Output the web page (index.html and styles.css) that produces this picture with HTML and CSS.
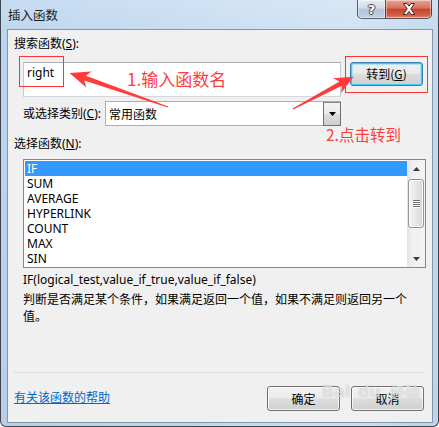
FILE: index.html
```html
<!DOCTYPE html>
<html lang="zh-CN">
<head>
<meta charset="utf-8">
<title>插入函数</title>
<link rel="stylesheet" href="styles.css">
</head>
<body>
<div class="window">
  <div class="titlebar">
    <span class="title">插入函数</span>
    <div class="caption-buttons">
      <div class="cap-btn cap-help"><span class="q">?</span></div>
      <div class="cap-btn cap-close">
        <svg width="14" height="12" viewBox="0 0 14 12">
          <path d="M1.5 0.5 L5 0.5 L7 3.2 L9 0.5 L12.5 0.5 L8.8 5.8 L12.7 11.5 L9.2 11.5 L7 8.4 L4.8 11.5 L1.3 11.5 L5.2 5.8 Z" fill="#ffffff" stroke="#4a2a22" stroke-width="1" stroke-linejoin="round"/>
        </svg>
      </div>
    </div>
  </div>
  <div class="client">
    <div class="label">搜索函数(<u>S</u>):</div>
    <div class="search-row">
      <div class="textbox">right</div>
      <div class="btn btn-default">转到(<u>G</u>)</div>
    </div>
    <div class="category-row">
      <span class="cat-label">或选择类别(<u>C</u>):</span>
      <div class="combo">
        <span class="combo-text">常用函数</span>
        <span class="combo-btn">
          <svg width="7" height="4" viewBox="0 0 7 4"><path d="M0 0 H7 L3.5 4 Z" fill="#000"/></svg>
        </span>
      </div>
    </div>
    <div class="label label-list">选择函数(<u>N</u>):</div>
    <div class="listbox">
      <ul class="items">
        <li class="selected">IF</li>
        <li>SUM</li>
        <li>AVERAGE</li>
        <li>HYPERLINK</li>
        <li>COUNT</li>
        <li>MAX</li>
        <li>SIN</li>
      </ul>
      <div class="scrollbar">
        <div class="sb-arrow">
          <svg width="7" height="4" viewBox="0 0 7 4"><path d="M0 4 H7 L3.5 0 Z" fill="#3c3c3c"/></svg>
        </div>
        <div class="sb-track">
          <div class="sb-thumb">
            <span class="grip"></span><span class="grip"></span><span class="grip"></span><span class="grip"></span>
          </div>
        </div>
        <div class="sb-arrow sb-arrow-down">
          <svg width="7" height="4" viewBox="0 0 7 4"><path d="M0 0 H7 L3.5 4 Z" fill="#3c3c3c"/></svg>
        </div>
      </div>
    </div>
    <div class="signature">IF(logical_test,value_if_true,value_if_false)</div>
    <div class="desc">判断是否满足某个条件，如果满足返回一个值，如果不满足则返回另一个值。</div>
    <div class="footer">
      <div class="separator"></div>
      <div class="footer-row">
        <a class="help-link" href="#">有关该函数的帮助</a>
        <div class="buttons">
          <div class="btn">确定</div>
          <div class="btn">取消</div>
        </div>
      </div>
    </div>
  </div>

  <div class="annot">
    <div class="redbox redbox-1"></div>
    <div class="redbox redbox-2"></div>
    <span class="note note-1">1.输入函数名</span>
    <span class="note note-2">2.点击转到</span>
    <svg class="arrows" width="439" height="427" viewBox="0 0 439 427">
      <polygon points="168.2,106.5 85.9,75.8 91.5,71.5 69.5,73 86.3,87.5 84.3,80.6 167.8,107.6" fill="#ff3b3b"/>
      <polygon points="293.2,109.4 341.9,85.8 341.2,93 353.5,76.8 333,78.2 339.5,81.4 292.6,108.6" fill="#ff3b3b"/>
    </svg>
    <div class="watermark">
      <span class="wm-bai">Bai</span><span class="wm-du">du</span><span class="wm-jy">经验</span>
    </div>
  </div>
</div>
</body>
</html>
```

FILE: styles.css
```css
* { box-sizing: border-box; }

html, body {
  margin: 0;
  padding: 0;
}

body {
  width: 439px;
  height: 427px;
  overflow: hidden;
  background: #ffffff;
  font-family: "Segoe UI", "Noto Sans", "Noto Sans CJK SC", sans-serif;
  font-size: 12px;
  color: #000;
}

.window {
  position: relative;
  width: 439px;
  height: 427px;
  border: 1px solid #3d4650;
  border-top: none;
  border-radius: 0 0 6px 6px;
  padding: 0 5px 3px 6px;
  background:
    linear-gradient(90deg, rgba(255,255,255,0) 0%, rgba(255,255,255,0.18) 45%, rgba(255,255,255,0.32) 80%, rgba(255,255,255,0.1) 100%),
    linear-gradient(180deg, #c6dcf2 0%, #bcd4ed 40px, #b7cfe8 100%);
  display: flex;
  flex-direction: column;
}

.titlebar {
  height: 29px;
  flex-shrink: 0;
  display: flex;
  align-items: flex-start;
}

.title {
  padding: 7px 0 0 1px;
  font-family: "Noto Sans CJK SC", sans-serif;
  font-size: 12.5px;
  line-height: 16px;
  color: #1e1e1e;
}

.caption-buttons {
  margin-left: auto;
  margin-right: 1px;
  display: flex;
}

.cap-btn {
  height: 19px;
  border: 1px solid rgba(40, 50, 65, 0.75);
  border-top: none;
  display: flex;
  align-items: center;
  justify-content: center;
  box-shadow: inset 0 0 0 1px rgba(255,255,255,0.45);
}

.cap-help {
  width: 28px;
  border-radius: 0 0 0 5px;
  border-right: none;
  background: linear-gradient(180deg, #e4ecf4 0%, #cfdbe8 45%, #b4c4d6 50%, #bfd0e2 100%);
}

.cap-help .q {
  font-family: "DejaVu Sans", sans-serif;
  font-weight: bold;
  font-size: 13px;
  line-height: 13px;
  color: #fff;
  text-shadow: 1px 0 0 #3a4656, -1px 0 0 #3a4656, 0 1px 0 #3a4656, 0 -1px 0 #3a4656;
}

.cap-close {
  width: 47px;
  border-radius: 0 0 5px 0;
  background: linear-gradient(180deg, #e8a496 0%, #d8705f 45%, #c7432d 52%, #d2604a 85%, #e38a6c 100%);
}

.cap-close svg { display: block; }

.client {
  flex: 1;
  border: 1px solid #8296aa;
  background: #f0f0f0;
  display: flex;
  flex-direction: column;
}

u { text-decoration: underline; text-underline-offset: 1px; }

.label {
  margin: 6px 0 0 6px;
  line-height: 16px;
  height: 16px;
}

.label-list {
  margin-top: 10px;
}

.search-row {
  display: flex;
  align-items: flex-start;
  margin: 10px 0 0 15px;
}

.textbox {
  width: 318px;
  height: 35px;
  background: #fff;
  border: 1px solid #abadb3;
  border-color: #abadb3 #c5c9d0 #d4d8de #c5c9d0;
  padding: 2px 3px;
  line-height: 16px;
}

.btn {
  width: 73px;
  height: 25px;
  border: 1px solid #707070;
  border-radius: 3px;
  background: linear-gradient(180deg, #f2f2f2 0%, #ebebeb 48%, #dddddd 52%, #cfcfcf 100%);
  box-shadow: inset 0 0 0 1px rgba(255,255,255,0.75);
  display: flex;
  align-items: center;
  justify-content: center;
  font-family: "Noto Sans CJK SC", sans-serif;
  line-height: 16px;
  color: #000;
}

.btn-default {
  margin-left: 9px;
  height: 24px;
  border-color: #3c7fb1;
  background: linear-gradient(180deg, #f1f1f1 0%, #e9e9e9 48%, #dcdcdc 52%, #d0d0d0 100%);
  box-shadow: inset 0 0 0 1px #45c8f0, inset 0 0 0 2px rgba(160, 225, 250, 0.8);
}

.category-row {
  display: flex;
  align-items: center;
  margin: 4px 0 0 15px;
}

.cat-label {
  width: 82px;
  line-height: 16px;
}

.combo {
  width: 236px;
  height: 25px;
  background: #fff;
  border: 1px solid #abadb3;
  display: flex;
  align-items: stretch;
}

.combo-text {
  flex: 1;
  padding-left: 3px;
  display: flex;
  align-items: center;
  font-family: "Noto Sans CJK SC", sans-serif;
}

.combo-btn {
  width: 18px;
  margin: 0 -1px -1px 0;
  border: 1px solid #707070;
  border-top-color: #8a8a8a;
  background: linear-gradient(180deg, #f2f2f2 0%, #ebebeb 48%, #dddddd 52%, #cfcfcf 100%);
  display: flex;
  align-items: center;
  justify-content: center;
}

.combo-btn svg { display: block; }

.listbox {
  margin: 7px 0 0 15px;
  width: 403px;
  height: 109px;
  border: 1px solid #828790;
  background: #fff;
  display: flex;
  overflow: hidden;
}

.items {
  list-style: none;
  margin: 0;
  padding: 1px 0 0 1px;
  flex: 1;
}

.items li {
  height: 15px;
  line-height: 15px;
  padding-left: 2px;
  white-space: nowrap;
}

.items li.selected {
  background: #3399ff;
  color: #fff;
}

.scrollbar {
  width: 18px;
  display: flex;
  flex-direction: column;
  background: linear-gradient(90deg, #e3e3e3 0%, #f0f0f0 30%, #f4f4f4 100%);
}

.sb-arrow {
  height: 17px;
  display: flex;
  align-items: center;
  justify-content: center;
}

.sb-arrow svg { display: block; }

.sb-track {
  flex: 1;
  padding: 2px 1px 0 1px;
}

.sb-thumb {
  height: 49px;
  border: 1px solid #959595;
  border-radius: 3px;
  background: linear-gradient(90deg, #f4f4f4 0%, #e6e6e6 50%, #d8d8d8 100%);
  box-shadow: inset 0 0 0 1px rgba(255,255,255,0.8);
  display: flex;
  flex-direction: column;
  align-items: center;
  justify-content: center;
  gap: 1px;
}

.grip {
  display: block;
  width: 7px;
  height: 1px;
  background: #6e6e6e;
  box-shadow: 0 1px 0 #ffffff;
}

.signature {
  margin: 4px 0 0 15px;
  line-height: 16px;
}

.desc {
  margin: 2px 0 0 15px;
  width: 394px;
  line-height: 17px;
  font-family: "Noto Sans CJK SC", sans-serif;
}

.footer {
  margin-top: auto;
  padding: 0 8px 11px 6px;
}

.separator {
  height: 1px;
  background: #d3dde6;
}

.footer-row {
  margin-top: 13px;
  display: flex;
  align-items: center;
}

.help-link {
  color: #0066cc;
  text-decoration: underline;
  font-family: "Noto Sans CJK SC", sans-serif;
  line-height: 16px;
  margin-top: -4px;
}

.buttons {
  margin-left: auto;
  display: flex;
  gap: 11px;
}

/* annotations overlay */
.annot {
  position: absolute;
  left: -1px;
  top: 0;
  width: 439px;
  height: 427px;
  pointer-events: none;
}

.arrows {
  position: absolute;
  left: 0;
  top: 0;
}

.redbox {
  position: absolute;
  border: 1px solid #ff3333;
}

.redbox-1 { left: 19px; top: 56px; width: 45px; height: 31px; }
.redbox-2 { left: 345px; top: 56px; width: 83px; height: 37px; }

.note {
  position: absolute;
  font-family: "Noto Sans CJK SC", sans-serif;
  color: #ff3d3d;
  line-height: 1;
  white-space: nowrap;
}

.note-1 { left: 127px; top: 70px; font-size: 17px; }
.note-2 { left: 326px; top: 127px; font-size: 15.5px; }

.watermark {
  position: absolute;
  left: 322px;
  top: 380px;
  width: 100px;
  height: 24px;
  color: rgba(255,255,255,0.5);
  font-family: "DejaVu Sans", sans-serif;
  font-weight: bold;
}

.wm-bai, .wm-du, .wm-jy {
  position: absolute;
  top: 4px;
  font-size: 16px;
  line-height: 16px;
  text-shadow: 0 0 1px rgba(150,150,150,0.55);
}

.wm-bai { left: 0; }
.wm-du { left: 36px; }
.wm-jy { left: 68px; font-family: "Noto Sans CJK SC", sans-serif; font-size: 15px; }
```
